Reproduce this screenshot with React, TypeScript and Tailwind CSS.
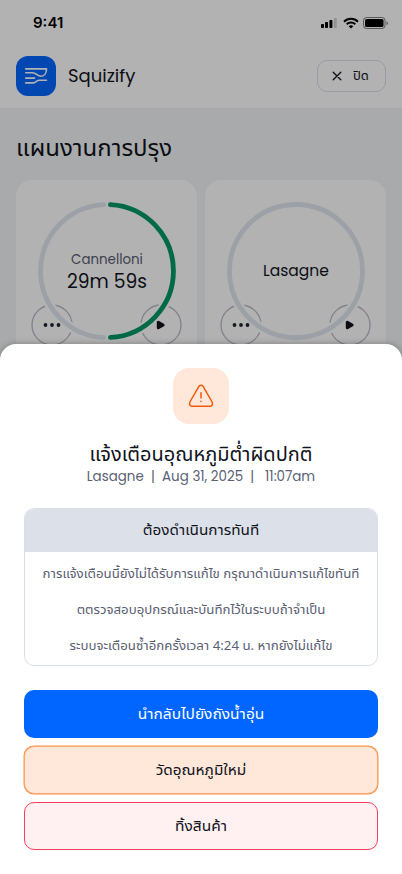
import React from "react";

const latin = "font-['Poppins','Noto_Sans_Thai','Noto_Sans_Thai_UI','Noto_Sans','Inter',sans-serif]";
const thai = "font-['Noto_Sans_Thai_UI','Noto_Sans_Thai','Noto_Sans','Open_Sans',sans-serif]";

function StatusBar() {
  return (
    <div className="flex h-11 items-center justify-between pl-[33px] pr-[13px] pt-[2px]">
      <span className="font-['Inter',sans-serif] text-[15px] font-semibold leading-5 text-black">9:41</span>
      <svg width="69" height="12" viewBox="0 0 69 12" fill="#000">
        <rect x="1" y="7" width="3" height="4" rx=".8" />
        <rect x="5" y="5" width="3" height="6" rx=".8" />
        <rect x="9.4" y="3" width="3" height="8" rx=".8" />
        <rect x="13.8" y="1" width="3" height="10" rx=".8" opacity=".18" />
        <g fill="none" stroke="#000" strokeWidth="2">
          <path d="M24 4.7a9.9 9.9 0 0 1 14 0" />
          <path d="M26.7 7.3a6.2 6.2 0 0 1 8.6 0" />
        </g>
        <path d="M28.7 9.2a3.4 3.4 0 0 1 4.6 0L31 11.4z" />
        <rect x="43.5" y=".5" width="21.5" height="11" rx="3" fill="none" stroke="#000" strokeOpacity=".5" />
        <rect x="45" y="2" width="18.5" height="8" rx="1.5" />
        <path d="M66.5 4.2v4q1.3-.5 1.3-2t-1.3-2" opacity=".5" />
      </svg>
    </div>
  );
}

function Logo() {
  return (
    <div className="size-10 rounded-[12px] bg-[#0066ff]">
      <svg width="40" height="40" viewBox="0 0 40 40" fill="none" stroke="#fff" strokeWidth="1.6" strokeLinecap="round" strokeLinejoin="round">
        <path d="M9.7 12.9H30.5C30.5 17.5 28 20.3 24.600 20.300C21.500 20.300 20.300 16.800 16.500 16.800H9.700" />
        <path d="M9.700 22.100H16.300L18.600 22.100" />
        <path d="M9.700 26.900H16.500C20 26.900 20.200 24.200 23.500 24.200H30.500" />
      </svg>
    </div>
  );
}

function TimerCard({ running, children }: { running?: boolean; children: React.ReactNode }) {
  return (
    <div className="relative h-[230px] flex-1 rounded-2xl bg-white">
      <svg className="block" width="181" height="180" viewBox="0 0 181 180" fill="none">
        <circle cx="36" cy="145" r="20" stroke="#b9b9c5" strokeWidth="1.3" />
        <circle cx="145" cy="145" r="20" stroke="#b9b9c5" strokeWidth="1.3" />
        <circle cx="91" cy="91" r="66.5" stroke="#fff" strokeWidth="9.5" />
        {running ? (
          <g strokeWidth="4.8" strokeLinecap="round">
            <path d="M87.6 157.41A66.5 66.5 0 0 1 87.6 24.59" stroke="#e0e6ef" />
            <path d="M94.4 24.59A66.5 66.5 0 0 1 94.4 157.41" stroke="#009966" />
          </g>
        ) : (
          <circle cx="91" cy="91" r="66.5" stroke="#e0e6ef" strokeWidth="4.8" />
        )}
        <g fill="#1d2433">
          <circle cx="29.5" cy="145" r="1.9" />
          <circle cx="36" cy="145" r="1.9" />
          <circle cx="42.5" cy="145" r="1.9" />
        </g>
        <path d="M142.3 142.2v5.6l4.8-2.8z" fill="#11141c" stroke="#11141c" strokeWidth="3" strokeLinejoin="round" />
      </svg>
      <div className="absolute inset-x-0 top-[68px] flex h-[46px] flex-col items-center justify-center pl-px">{children}</div>
    </div>
  );
}

export default function App() {
  return (
    <div className={`relative h-[874px] w-[402px] overflow-hidden bg-[#f2f4f7] text-[#11141c] ${latin}`}>
      <header className="h-[109px] border-b border-[#f0f0f2] bg-white">
        <StatusBar />
        <div className="flex h-16 items-center px-4">
          <Logo />
          <span className="ml-3 text-[18px] leading-6">Squizify</span>
          <button className="ml-auto flex h-8 w-[69px] items-center rounded-[10px] border border-[#d9dee8] pl-[13.5px]">
            <svg width="10" height="10" viewBox="0 0 10 10" stroke="#11141c" strokeWidth="1.3" strokeLinecap="round"><path d="m1.2 1.2 7.6 7.6M8.8 1.2 1.2 8.8" /></svg>
            <span className={`ml-[11.5px] text-[13px] ${thai}`}>ปิด</span>
          </button>
        </div>
      </header>
      <main className="px-4 pt-[22px]">
        <h1 className={`h-[49px] text-[24px] leading-8 ${thai}`}>แผนงานการปรุง</h1>
        <div className="flex gap-2">
          <TimerCard running>
            <span className="pt-px text-[13.4px] leading-[19px] text-[#5a6072]">Cannelloni</span>
            <span className="text-[18.7px] leading-[25px]">29m 59s</span>
          </TimerCard>
          <TimerCard>
            <span className="text-[15.5px] leading-6">Lasagne</span>
          </TimerCard>
        </div>
      </main>

      <div className="absolute inset-0 bg-black/30" />

      <section className="absolute inset-x-0 bottom-0 flex h-[530px] flex-col rounded-t-2xl bg-white px-6 pt-6 shadow-[0_0_6px_rgba(0,0,0,0.3)]">
        <div className="mx-auto flex size-14 shrink-0 items-center justify-center rounded-2xl bg-[#ffe7da]">
          <svg width="26" height="26" viewBox="0 0 26 26" fill="none" stroke="#f05a0a" strokeWidth="1.5" strokeLinecap="round" strokeLinejoin="round">
            <path d="M10.9 3.3 1.9 19Q.6 23.2 4.2 23.3h17.6Q25.4 23.2 24.1 19L15.1 3.3Q13 1 10.9 3.3Z" />
            <path d="M13 9.8v5.2M13 18.3v.2" />
          </svg>
        </div>
        <h2 className={`mt-4 text-center text-[20px] leading-7 ${thai}`}>แจ้งเตือนอุณหภูมิต่ำผิดปกติ</h2>
        <p className="-mt-px whitespace-pre text-center text-[13.45px] leading-5 text-[#5a6275]">Lasagne  |  Aug 31, 2025  |   11:07am</p>
        <div className="mt-[21px] h-[158px] shrink-0 overflow-hidden rounded-[10px] border border-[#d9dfea]">
          <h3 className={`flex h-[43px] items-center justify-center bg-[#dce1e9] pb-0.5 text-[15.3px] ${thai}`}>ต้องดำเนินการทันที</h3>
          <div className={`pt-[3px] text-center text-[13.25px] leading-9 text-[#5a6072] ${thai}`}>
            <p>การแจ้งเตือนนี้ยังไม่ได้รับการแก้ไข กรุณาดำเนินการแก้ไขทันที</p>
            <p>ตตรวจสอบอุปกรณ์และบันทึกไว้ในระบบถ้าจำเป็น</p>
            <p>ระบบจะเตือนซ้ำอีกครั้งเวลา 4:24 น. หากยังไม่แก้ไข</p>
          </div>
        </div>
        <div className={`mt-6 flex flex-col gap-2 text-[15.5px] ${thai}`}>
          <button className="h-12 rounded-[10px] bg-[#0066ff] text-white">นำกลับไปยังถังน้ำอุ่น</button>
          <button className="h-12 rounded-[10px] border border-[#f97316]/55 bg-[#ffe7da] text-[15.4px] shadow-[0_0_0_0.5px_rgba(249,115,22,0.8)]">วัดอุณหภูมิใหม่</button>
          <button className="h-12 rounded-[10px] border border-[#f43f5e] bg-[#fff0f1]">ทิ้งสินค้า</button>
        </div>
      </section>
    </div>
  );
}
